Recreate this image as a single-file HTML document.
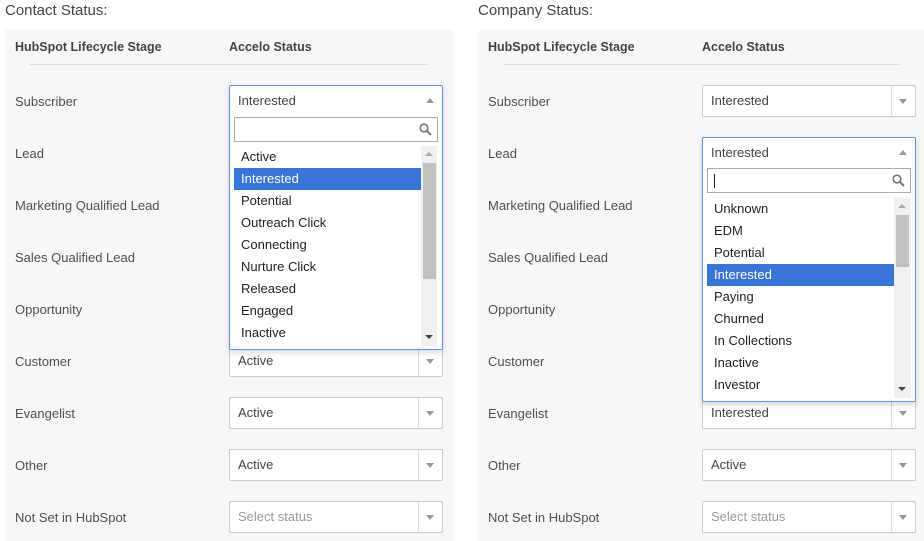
<!DOCTYPE html>
<html><head><meta charset="utf-8"><style>
*{box-sizing:border-box;margin:0;padding:0}
body{width:924px;height:541px;background:#fff;font-family:"Liberation Sans",sans-serif;position:relative;overflow:hidden;color:#555}
.a{position:absolute}
.title{font-size:15px;color:#444}
.panel{background:#f7f7f7}
.hd{font-size:12.5px;font-weight:bold;color:#444}
.line{height:1px;background:#ddd}
.lbl{font-size:13px;color:#505050}
.sel{background:#fff;border:1px solid #ccc;border-radius:2px;height:32px;font-size:13px;color:#444;padding:7px 0 0 8px}
.sel .arr{position:absolute;right:0;top:0;width:24px;height:100%;border-left:1px solid #ddd}
.sel .arr:after{content:"";position:absolute;left:7px;top:13px;border-left:4px solid transparent;border-right:4px solid transparent;border-top:5px solid #999}
.ph{color:#999}
.dd{background:#fff;border:1px solid #5b97ec;border-radius:2px;box-shadow:0 3px 6px rgba(0,0,0,.15)}
.dd .top{position:absolute;left:8px;top:7px;font-size:13px;color:#444}
.dd .up{position:absolute;right:8px;top:12px;border-left:4px solid transparent;border-right:4px solid transparent;border-bottom:5px solid #999}
.srch{position:absolute;border:1px solid #aaa;height:25px;background:#fff}
.item{position:absolute;height:22px;font-size:13px;color:#222;padding:3px 0 0 7px}
.hl{background:#3875d7;color:#fff}
.sb{position:absolute;background:#f0f0f0}
.th{position:absolute;background:#c1c1c1}
</style></head><body>
<div class="a title" style="left:5px;top:2px">Contact Status:</div>
<div class="a title" style="left:478px;top:2px">Company Status:</div>
<div class="a panel" style="left:5px;top:30px;width:448px;height:511px"></div>
<div class="a panel" style="left:478px;top:30px;width:446px;height:511px"></div>

<div class="a hd" style="left:15px;top:40px">HubSpot Lifecycle Stage</div>
<div class="a hd" style="left:229px;top:40px">Accelo Status</div>
<div class="a line" style="left:30px;top:64px;width:398px"></div>
<div class="a hd" style="left:488px;top:40px">HubSpot Lifecycle Stage</div>
<div class="a hd" style="left:702px;top:40px">Accelo Status</div>
<div class="a line" style="left:503px;top:64px;width:397px"></div>

<div class="a lbl" style="left:15px;top:94px">Subscriber</div>
<div class="a lbl" style="left:15px;top:146px">Lead</div>
<div class="a lbl" style="left:15px;top:198px">Marketing Qualified Lead</div>
<div class="a lbl" style="left:15px;top:250px">Sales Qualified Lead</div>
<div class="a lbl" style="left:15px;top:302px">Opportunity</div>
<div class="a lbl" style="left:15px;top:354px">Customer</div>
<div class="a lbl" style="left:15px;top:406px">Evangelist</div>
<div class="a lbl" style="left:15px;top:458px">Other</div>
<div class="a lbl" style="left:15px;top:510px">Not Set in HubSpot</div>

<div class="a lbl" style="left:488px;top:94px">Subscriber</div>
<div class="a lbl" style="left:488px;top:146px">Lead</div>
<div class="a lbl" style="left:488px;top:198px">Marketing Qualified Lead</div>
<div class="a lbl" style="left:488px;top:250px">Sales Qualified Lead</div>
<div class="a lbl" style="left:488px;top:302px">Opportunity</div>
<div class="a lbl" style="left:488px;top:354px">Customer</div>
<div class="a lbl" style="left:488px;top:406px">Evangelist</div>
<div class="a lbl" style="left:488px;top:458px">Other</div>
<div class="a lbl" style="left:488px;top:510px">Not Set in HubSpot</div>

<div class="a sel" style="left:229px;top:345px;width:214px">Active<span class="arr"></span></div>
<div class="a sel" style="left:229px;top:397px;width:214px">Active<span class="arr"></span></div>
<div class="a sel" style="left:229px;top:449px;width:214px">Active<span class="arr"></span></div>
<div class="a sel" style="left:229px;top:501px;width:214px"><span class="ph">Select status</span><span class="arr"></span></div>

<div class="a sel" style="left:702px;top:85px;width:214px">Interested<span class="arr"></span></div>
<div class="a sel" style="left:702px;top:397px;width:214px">Interested<span class="arr"></span></div>
<div class="a sel" style="left:702px;top:449px;width:214px">Active<span class="arr"></span></div>
<div class="a sel" style="left:702px;top:501px;width:214px"><span class="ph">Select status</span><span class="arr"></span></div>

<div class="a dd" style="left:229px;top:85px;width:214px;height:265px">
 <div class="top">Interested</div><div class="up"></div>
 <div class="srch" style="left:4px;top:31px;width:204px"><svg class="a" style="right:5px;top:5px" width="13" height="13" viewBox="0 0 13 13"><circle cx="5" cy="5" r="3.8" fill="none" stroke="#777" stroke-width="1.6"/><path d="M8 8L12 12" stroke="#777" stroke-width="2"/></svg></div>
 <div class="item" style="left:4px;top:60px;width:187px">Active</div>
 <div class="item hl" style="left:4px;top:82px;width:187px">Interested</div>
 <div class="item" style="left:4px;top:104px;width:187px">Potential</div>
 <div class="item" style="left:4px;top:126px;width:187px">Outreach Click</div>
 <div class="item" style="left:4px;top:148px;width:187px">Connecting</div>
 <div class="item" style="left:4px;top:170px;width:187px">Nurture Click</div>
 <div class="item" style="left:4px;top:192px;width:187px">Released</div>
 <div class="item" style="left:4px;top:214px;width:187px">Engaged</div>
 <div class="item" style="left:4px;top:236px;width:187px">Inactive</div>
 <div class="sb" style="left:191px;top:60px;width:16px;height:200px">
  <div class="a" style="left:4px;top:6px;border-left:4px solid transparent;border-right:4px solid transparent;border-bottom:4px solid #aaa"></div>
  <div class="th" style="left:2px;top:17px;width:13px;height:116px"></div>
  <div class="a" style="left:4px;top:189px;border-left:4px solid transparent;border-right:4px solid transparent;border-top:4px solid #444"></div>
 </div>
</div>

<div class="a dd" style="left:702px;top:137px;width:214px;height:265px">
 <div class="top">Interested</div><div class="up"></div>
 <div class="srch" style="left:4px;top:30px;width:204px"><div class="a" style="left:6px;top:5px;width:1px;height:14px;background:#222"></div><svg class="a" style="right:5px;top:5px" width="13" height="13" viewBox="0 0 13 13"><circle cx="5" cy="5" r="3.8" fill="none" stroke="#777" stroke-width="1.6"/><path d="M8 8L12 12" stroke="#777" stroke-width="2"/></svg></div>
 <div class="item" style="left:4px;top:60px;width:187px">Unknown</div>
 <div class="item" style="left:4px;top:82px;width:187px">EDM</div>
 <div class="item" style="left:4px;top:104px;width:187px">Potential</div>
 <div class="item hl" style="left:4px;top:126px;width:187px">Interested</div>
 <div class="item" style="left:4px;top:148px;width:187px">Paying</div>
 <div class="item" style="left:4px;top:170px;width:187px">Churned</div>
 <div class="item" style="left:4px;top:192px;width:187px">In Collections</div>
 <div class="item" style="left:4px;top:214px;width:187px">Inactive</div>
 <div class="item" style="left:4px;top:236px;width:187px">Investor</div>
 <div class="sb" style="left:191px;top:60px;width:17px;height:200px">
  <div class="a" style="left:4px;top:6px;border-left:4px solid transparent;border-right:4px solid transparent;border-bottom:4px solid #aaa"></div>
  <div class="th" style="left:2px;top:17px;width:13px;height:52px"></div>
  <div class="a" style="left:4px;top:189px;border-left:4px solid transparent;border-right:4px solid transparent;border-top:4px solid #444"></div>
 </div>
</div>
</body></html>
